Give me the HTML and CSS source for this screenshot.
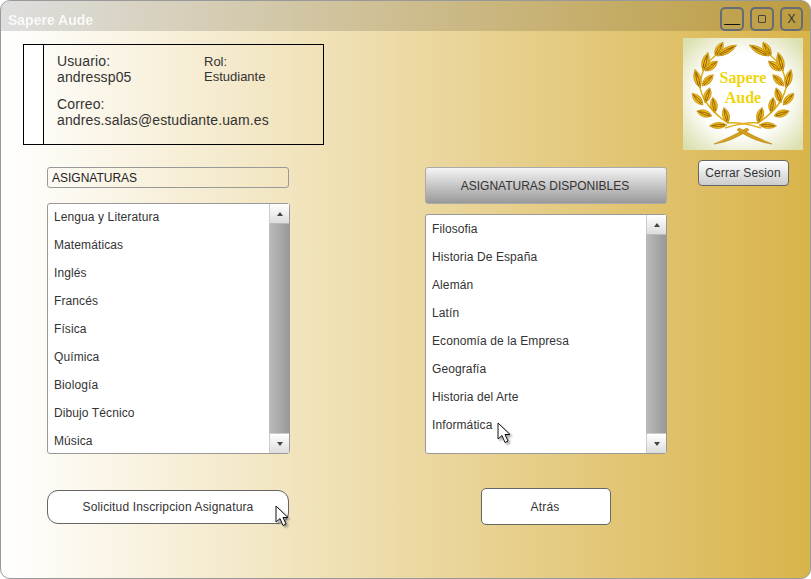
FILE: index.html
```html
<!DOCTYPE html>
<html lang="en">
<head>
    <meta charset="UTF-8">
    <meta name="viewport" content="width=device-width, initial-scale=1.0">
    <title>Sapere Aude</title>
    <link rel="stylesheet" href="styles.css">
</head>
<body>

<div class="window">
    <div class="title-bar">
        <span class="title-text">Sapere Aude</span>
        <div class="window-controls">
            <div class="window-btn window-btn-min">__</div>
            <div class="window-btn"><span class="max-square"></span></div>
            <div class="window-btn">X</div>
        </div>
    </div>

    <div class="window-body">
        <div class="main">
            <div class="user-box">
                <div class="user-strip"></div>
                <div class="user-info">
                    <div class="user-field">Usuario:<br>andressp05</div>
                    <div class="user-field user-role">Rol:<br>Estudiante</div>
                    <div class="user-field user-mail">Correo:<br>andres.salas@estudiante.uam.es</div>
                </div>
            </div>

            <div class="columns">
                <div class="column">
                    <div class="subject-label">ASIGNATURAS</div>
                    <div class="list">
                        <div class="list-items">
                            <div class="list-item">Lengua y Literatura</div>
                            <div class="list-item">Matemáticas</div>
                            <div class="list-item">Inglés</div>
                            <div class="list-item">Francés</div>
                            <div class="list-item">Física</div>
                            <div class="list-item">Química</div>
                            <div class="list-item">Biología</div>
                            <div class="list-item">Dibujo Técnico</div>
                            <div class="list-item">Música</div>
                        </div>
                        <div class="scrollbar">
                            <div class="scroll-btn"><span class="arrow-up"></span></div>
                            <div class="scroll-thumb"></div>
                            <div class="scroll-btn scroll-btn-down"><span class="arrow-down"></span></div>
                        </div>
                    </div>
                </div>

                <div class="column">
                    <div class="subject-header">ASIGNATURAS DISPONIBLES</div>
                    <div class="list">
                        <div class="list-items">
                            <div class="list-item">Filosofia</div>
                            <div class="list-item">Historia De España</div>
                            <div class="list-item">Alemán</div>
                            <div class="list-item">Latín</div>
                            <div class="list-item">Economía de la Empresa</div>
                            <div class="list-item">Geografía</div>
                            <div class="list-item">Historia del Arte</div>
                            <div class="list-item">Informática</div>
                        </div>
                        <div class="scrollbar">
                            <div class="scroll-btn"><span class="arrow-up"></span></div>
                            <div class="scroll-thumb"></div>
                            <div class="scroll-btn scroll-btn-down"><span class="arrow-down"></span></div>
                        </div>
                        <svg class="cursor cursor-list" width="16" height="23" viewBox="0 0 16 23"><path d="M1 1V17L5 13.5L8 20.5L11 19L8 12.500H13Z"/></svg>
                    </div>
                </div>
            </div>

            <div class="actions">
                <div class="action-btn action-request">
                    Solicitud Inscripcion Asignatura
                    <svg class="cursor cursor-btn" width="16" height="23" viewBox="0 0 16 23"><path d="M1 1V17L5 13.5L8 20.5L11 19L8 12.500H13Z"/></svg>
                </div>
                <div class="action-btn action-back">Atrás</div>
            </div>
        </div>

        <div class="side">
            <svg class="logo" width="120" height="112" viewBox="0 0 120 112">
                <defs>
                    <radialGradient id="logoBg" cx="50%" cy="50%" r="66%">
                        <stop offset="0.55" stop-color="#ffffff"/>
                        <stop offset="1" stop-color="#dcdfae"/>
                    </radialGradient>
                    <g id="leaf">
                        <path d="M0 0Q8 -7 16 0Q8 7 0 0Z" fill="#ecb916" stroke="#b9830c" stroke-width="0.6"/>
                        <path d="M2 -0.600Q8 -2 14 0M2 0.600Q8 2 14 0" fill="none" stroke="#8f5a06" stroke-width="0.8"/>
                    </g>
                    <g id="branch">
                        <path d="M78 90Q58 84 45 85Q22 70 17 50Q17 30 32 18" fill="none" stroke="#e0ae18" stroke-width="1.500"/>
                        <path d="M64 90Q46 100 31 106Q48 104 66 92Z" fill="#d3a01a" stroke="#b9830c" stroke-width="0.6"/>
                        <use href="#leaf" transform="translate(32 18) rotate(-60)"/>
                        <use href="#leaf" transform="translate(34 18) rotate(-29) scale(1.400 .9)"/>
                        <use href="#leaf" transform="translate(20 33) rotate(-75) scale(1.200 1)"/>
                        <use href="#leaf" transform="translate(22 33) rotate(-38)"/>
                        <use href="#leaf" transform="translate(17 50) rotate(-105) scale(1.200 1)"/>
                        <use href="#leaf" transform="translate(19 48) rotate(-45)"/>
                        <use href="#leaf" transform="translate(20 67) rotate(-133)"/>
                        <use href="#leaf" transform="translate(22 65) rotate(-72)"/>
                        <use href="#leaf" transform="translate(29 78) rotate(-162)"/>
                        <use href="#leaf" transform="translate(32 75) rotate(-98)"/>
                        <use href="#leaf" transform="translate(45 85) rotate(-105)"/>
                        <use href="#leaf" transform="translate(44 87) rotate(177) scale(1.100 .9)"/>
                    </g>
                </defs>
                <rect width="120" height="112" fill="url(#logoBg)"/>
                <use href="#branch"/>
                <use href="#branch" transform="translate(120 0) scale(-1 1)"/>
                <text class="logo-text" x="60" y="45">Sapere</text>
                <text class="logo-text" x="60" y="65">Aude</text>
            </svg>
            <div class="logout-btn">Cerrar Sesion</div>
        </div>
    </div>
</div>

</body>
</html>
```

FILE: styles.css
```css
* {
    box-sizing: border-box;
}

body {
    margin: 0;
    background-color: white;
    font-family: "Liberation Sans", Arial, sans-serif;
    color: #333;
}

/* Main window */
.window {
    width: 811px;
    height: 579px;
    border: 1px solid #999;
    border-radius: 10px;
    overflow: hidden;
    background: linear-gradient(to right, #fff, #d9b44a);
}

.title-bar {
    height: 30px;
    display: flex;
    justify-content: space-between;
    align-items: flex-end;
    padding: 0 7px 0 7px;
    background-color: rgba(0, 0, 0, 0.13);
}

.title-text {
    margin-bottom: 3px;
    color: #fff;
    font-size: 14px;
    font-weight: bold;
    opacity: 0.85;
}

.window-controls {
    display: flex;
    gap: 6px;
}

.window-btn {
    width: 24px;
    height: 24px;
    display: flex;
    align-items: center;
    justify-content: center;
    border: 2px solid #666b75;
    border-radius: 5px;
    font-size: 12px;
}

.window-btn:last-child {
    width: 23px;
}

.window-btn-min {
    color: #111;
    font-size: 14px;
    padding-bottom: 5px;
}

.max-square {
    width: 8px;
    height: 8px;
    border: 1px solid #444;
    border-radius: 1px;
}

.window-body {
    display: flex;
    padding-right: 7px;
}

.main {
    flex: 1;
    padding: 13px 0 0 22px;
}

/* User details box */
.user-box {
    width: 301px;
    height: 101px;
    display: flex;
    border: 1px solid #000;
}

.user-strip {
    width: 20px;
    background-color: #fff;
    border-right: 1px solid #000;
}

.user-info {
    flex: 1;
    display: grid;
    grid-template-columns: 147px 1fr;
    align-content: start;
    row-gap: 11px;
    padding: 8px 0 0 13px;
    font-size: 14px;
    line-height: 16px;
    letter-spacing: 0.13px;
}

.user-role {
    margin-top: 1px;
    font-size: 13px;
    line-height: 15px;
    letter-spacing: 0;
}

.user-mail {
    grid-column: 1 / 3;
}

/* Subject columns */
.columns {
    display: grid;
    grid-template-columns: 243px 242px;
    grid-template-rows: 287px;
    column-gap: 135px;
    margin: 22px 0 0 24px;
}

.column {
    min-height: 0;
    display: flex;
    flex-direction: column;
}

.subject-label {
    height: 21px;
    margin: 0 1px 15px 0;
    padding: 3px 4px;
    border: 1px solid #999;
    border-radius: 3px;
    font-size: 12px;
    color: #222;
}

.subject-header {
    height: 37px;
    margin-bottom: 10px;
    display: flex;
    align-items: center;
    justify-content: center;
    padding-right: 2px;
    border: 1px solid #aaa;
    border-radius: 3px;
    background: linear-gradient(to bottom, #f4f4f4, #999);
    font-size: 12px;
}

.list {
    position: relative;
    flex: 1;
    min-height: 0;
    display: flex;
    border: 1px solid #999;
    border-radius: 3px;
    background-color: #fff;
}

.list-items {
    flex: 1;
    overflow: hidden;
}

.list-item {
    height: 28px;
    padding-left: 6px;
    font-size: 12px;
    line-height: 26px;
    letter-spacing: 0.1px;
}

.column:last-child .list-item {
    line-height: 28px;
}

.scrollbar {
    width: 20px;
    display: flex;
    flex-direction: column;
}

.scroll-btn {
    height: 20px;
    display: flex;
    align-items: center;
    justify-content: center;
    background: linear-gradient(to bottom, #fff, #ddd);
    border-left: 1px solid #ccc;
    border-bottom: 1px solid #bbb;
}

.scroll-btn-down {
    border-top: 1px solid #ccc;
    border-bottom: none;
}

.scroll-thumb {
    flex: 1;
    background: linear-gradient(to right, #bbb, #999);
}

.arrow-up {
    border-left: 3px solid transparent;
    border-right: 3px solid transparent;
    border-bottom: 4px solid #444;
}

.arrow-down {
    border-left: 3px solid transparent;
    border-right: 3px solid transparent;
    border-top: 4px solid #444;
}

/* Bottom buttons */
.actions {
    display: grid;
    grid-template-columns: 242px 242px;
    column-gap: 136px;
    align-items: center;
    margin: 34px 0 0 24px;
}

.action-btn {
    position: relative;
    display: flex;
    align-items: center;
    justify-content: center;
    border: 1px solid #666;
    background-color: #fff;
    font-size: 12px;
    letter-spacing: 0.15px;
}

.action-request {
    height: 34px;
    border-radius: 11px;
}

.action-back {
    width: 130px;
    height: 37px;
    justify-self: center;
    padding-right: 2px;
    border-radius: 5px;
}

/* Mouse pointer, lies over the content */
.cursor {
    position: absolute;
    filter: drop-shadow(2px 2px 1px rgba(0, 0, 0, 0.35));
}

.cursor path {
    fill: #fff;
    stroke: #111;
    stroke-width: 1;
}

.cursor-list {
    left: 71px;
    top: 207px;
}

.cursor-btn {
    left: 227px;
    top: 14px;
}

/* Logo and logout */
.side {
    width: 120px;
    padding-top: 7px;
    display: flex;
    flex-direction: column;
    align-items: center;
}

.logo {
    display: block;
}

.logo-text {
    fill: #eed50c;
    font-family: "Liberation Serif", serif;
    font-size: 16px;
    font-weight: bold;
    text-anchor: middle;
}

.logout-btn {
    width: 91px;
    height: 26px;
    margin-top: 10px;
    display: flex;
    align-items: center;
    justify-content: center;
    border: 1px solid #666;
    border-radius: 4px;
    background: linear-gradient(to bottom, #fff, #ccc);
    font-size: 12px;
    letter-spacing: 0.1px;
}
```
